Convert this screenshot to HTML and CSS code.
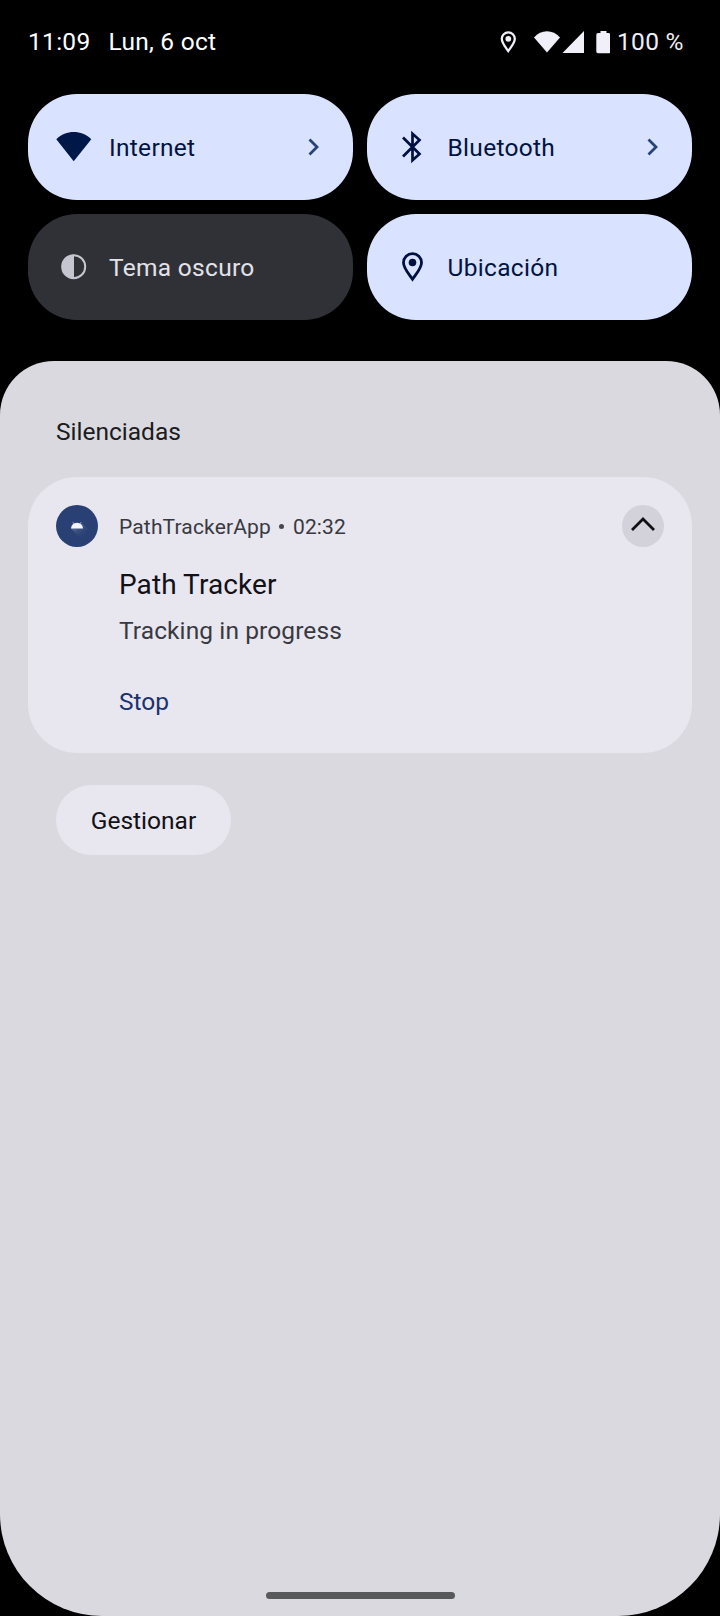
FILE: index.html
```html
<!DOCTYPE html>
<html lang="es">
<head>
<meta charset="utf-8">
<title>Notificaciones</title>
<link rel="stylesheet" href="styles.css">
</head>
<body>
<header class="status">
  <span class="clock">11:09</span>
  <span class="date">Lun, 6 oct</span>
  <svg class="status-icons" width="112" height="26" viewBox="498 29 112 26" fill="#f1eff7">
    <path fill="none" stroke="#f1eff7" stroke-width="2.3" d="M508.200 51C505 46.500 501.800 43 501.800 38.800a6.500 6.500 0 0 1 13 0C514.800 43 511.500 46.500 508.200 51z"/>
    <circle cx="508.300" cy="38.800" r="2.900"/>
    <path d="M534 37.500C541 29 553 29 560 37.500L547 52.500z"/>
    <path d="M584 31v22h-21.500z"/>
    <path d="M600.500 33v-2h6v2h2a1.800 1.800 0 0 1 1.800 1.800v16.700a1.800 1.800 0 0 1-1.800 1.800h-10.400a1.800 1.800 0 0 1-1.800-1.800V34.800a1.800 1.800 0 0 1 1.800-1.800z"/>
  </svg>
  <span class="battery">100 %</span>
</header>

<section class="tiles">
  <div class="tile tile-on">
    <svg class="tile-icon" width="36" height="36" viewBox="0 0 36 36"><path fill="#001847" d="M.3 10.200C10 .700 25.500.700 35.300 10.200L17.700 32.300z"/></svg>
    <span class="tile-label">Internet</span>
    <svg class="chevron" width="12" height="18" viewBox="0 0 12 18"><path d="M1.500 1.500 9 9l-7.500 7.500"/></svg>
  </div>
  <div class="tile tile-on">
    <svg class="tile-icon" width="36" height="36" viewBox="0 0 36 36"><path fill="none" stroke="#001040" stroke-width="2.700" d="M8 8.500 24.500 25l-7 6.200V4.800l7 6.200L8 27.500"/></svg>
    <span class="tile-label">Bluetooth</span>
    <svg class="chevron" width="12" height="18" viewBox="0 0 12 18"><path d="M1.500 1.500 9 9l-7.500 7.500"/></svg>
  </div>
  <div class="tile tile-off">
    <svg class="tile-icon" width="36" height="36" viewBox="0 0 36 36"><circle cx="17.700" cy="17.700" r="11.500" fill="none" stroke="#c6c6d0" stroke-width="2"/><path fill="#c6c6d0" d="M18 5.500v24.400a12.200 12.200 0 0 1 0-24.400z"/></svg>
    <span class="tile-label">Tema oscuro</span>
  </div>
  <div class="tile tile-on">
    <svg class="tile-icon" width="36" height="36" viewBox="0 0 36 36"><path fill="none" stroke="#001040" stroke-width="2.800" d="M17.500 30.300C13.200 24 8.500 19 8.500 13.700a9 9 0 0 1 18 0C26.500 19 21.800 24 17.500 30.300z"/><circle cx="17.500" cy="13.500" r="3.800" fill="#001040"/></svg>
    <span class="tile-label">Ubicación</span>
  </div>
</section>

<main class="shade">
  <h2 class="section-title">Silenciadas</h2>
  <article class="card">
    <div class="avatar">
      <svg width="42" height="42" viewBox="0 0 42 42">
        <defs><linearGradient id="shadow" x1="0" y1="0" x2="1" y2="1"><stop offset="0" stop-color="#7a86ae"/><stop offset=".8" stop-color="#294074" stop-opacity="0"/></linearGradient></defs>
        <path fill="url(#shadow)" d="M15 23.500 26.500 18.500 34 26 25 34z"/>
        <path fill="#f4f5fb" d="M15 23.500a6 5.800 0 0 1 12 0z"/>
        <path stroke="#dfe3f0" stroke-width=".8" d="m17 17.300 1.400 2M25 17.300l-1.400 2"/>
      </svg>
    </div>
    <div class="card-body">
      <p class="meta"><span class="app">PathTrackerApp</span><span class="dot"></span><span class="time">02:32</span></p>
      <h3 class="card-title">Path Tracker</h3>
      <p class="card-text">Tracking in progress</p>
      <a class="action">Stop</a>
    </div>
    <div class="collapse"><svg width="42" height="42" viewBox="0 0 42 42"><path fill="none" stroke="#101014" stroke-width="2.800" d="M10 25 21 14l11 11"/></svg></div>
  </article>
  <button class="manage">Gestionar</button>
  <div class="home-bar"></div>
</main>
</body>
</html>
```
FILE: styles.css
```css
* { box-sizing: border-box; }
body {
  margin: 0;
  width: 720px;
  height: 1616px;
  display: flex;
  flex-direction: column;
  background: #000;
  font: 24.5px/30px Roboto, sans-serif;
  overflow: hidden;
}
h2, h3, p { margin: 0; font-weight: 400; }
svg { display: block; flex: none; }

.status {
  height: 94px;
  padding: 27px 0 0 28px;
  display: flex;
  align-items: flex-start;
  color: #fff;
}
.clock { width: 80.5px; letter-spacing: .3px; }
.date { letter-spacing: .25px; }
.status-icons { margin: 2px 0 0 auto; }
.battery { width: 110px; padding-left: 7px; color: #f1eff7; white-space: nowrap; letter-spacing: .3px; }

.tiles {
  height: 267px;
  padding: 0 28px;
  display: grid;
  grid-template-columns: 325px 325.5px;
  grid-template-rows: 106px 105.5px;
  row-gap: 14px;
  justify-content: space-between;
  align-content: start;
}
.tile {
  display: flex;
  align-items: center;
  padding: 0 33px 0 28px;
  border-radius: 49px;
}
.tile-on { background: #d9e2ff; color: #001440; }
.tile-off { background: #303136; color: #e3e2e9; }
.tile-label { margin: 2px auto 0 17px; letter-spacing: .3px; }
.chevron { fill: none; stroke: #264479; stroke-width: 2.8; }

.shade {
  flex: 1;
  display: flex;
  flex-direction: column;
  align-items: flex-start;
  padding: 56px 28px 17px;
  background: #dad9df;
  border-radius: 54px 54px 102px 102px;
}
.section-title { margin-left: 28px; font-size: 24.5px; color: #1b1b20; }
.card {
  width: 664px;
  height: 276px;
  margin-top: 30px;
  padding: 28px;
  display: flex;
  align-items: flex-start;
  background: #e8e6ef;
  border-radius: 49px;
}
.avatar { width: 42px; height: 42px; border-radius: 50%; background: #294074; }
.card-body { flex: 1; padding-left: 21px; }
.meta { display: flex; align-items: center; height: 43px; font-size: 21px; letter-spacing: .15px; color: #38393f; }
.dot { width: 5px; height: 5px; margin: 0 9px 0 8px; border-radius: 50%; background: #45464f; }
.card-title { margin-top: 19px; font-size: 28px; line-height: 36px; letter-spacing: .08px; color: #111116; }
.card-text { margin-top: 13px; letter-spacing: .1px; color: #38393f; }
.action { display: block; margin-top: 41px; color: #1a3270; }
.collapse { width: 42px; height: 42px; border-radius: 50%; background: #d3d2da; }
.manage {
  width: 175px;
  height: 70px;
  margin: 32px 0 0 28px;
  padding: 1px 0 0;
  border: 0;
  border-radius: 35px;
  background: #e8e6ef;
  color: #111116;
  font: inherit;
}
.home-bar { width: 189px; height: 7px; margin: auto auto 0; border-radius: 4px; background: #58595b; }
```
